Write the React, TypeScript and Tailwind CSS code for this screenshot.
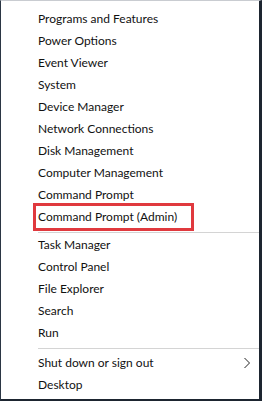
const Item = ({ label }: { label: string }) => (
  <div className="h-[22px] flex items-center pl-[37px]">{label}</div>
);

const Separator = ({ bottom }: { bottom: string }) => (
  <div className={`pt-[4px] ${bottom}`}>
    <div className="ml-[37px] h-px bg-[#d4d4d4]" />
  </div>
);

export default function App() {
  return (
    <div className="w-[263px] h-[402px] bg-white">
      <div
        className="w-[262px] h-[401px] bg-white border-l border-t border-r-[3px] border-b-[2px] border-l-[#2b3644] border-t-[#c9ccd1] border-r-[#1d2530] border-b-[#1d2530] pt-[7px] text-[12px] text-[#111] leading-none"
        style={{ fontFamily: 'Lato, "Noto Sans", sans-serif' }}
      >
        <Item label="Programs and Features" />
        <Item label="Power Options" />
        <Item label="Event Viewer" />
        <Item label="System" />
        <Item label="Device Manager" />
        <Item label="Network Connections" />
        <Item label="Disk Management" />
        <Item label="Computer Management" />
        <Item label="Command Prompt" />
        <div className="h-[22px] flex items-center pl-[32px]">
          <span className="w-[161px] h-[28px] flex items-center border-[3px] border-[#e0393e] pl-[2px]">
            Command Prompt (Admin)
          </span>
        </div>
        <Separator bottom="pb-px" />
        <Item label="Task Manager" />
        <Item label="Control Panel" />
        <Item label="File Explorer" />
        <Item label="Search" />
        <Item label="Run" />
        <Separator bottom="pb-[3px]" />
        <div className="h-[22px] flex items-center pl-[37px] pr-[8px] justify-between">
          <span>Shut down or sign out</span>
          <svg width="8" height="12" viewBox="0 0 8 12" className="text-[#222]">
            <polyline points="1.5,1 6.5,6 1.5,11" fill="none" stroke="currentColor" strokeWidth="1" />
          </svg>
        </div>
        <Item label="Desktop" />
      </div>
    </div>
  );
}
